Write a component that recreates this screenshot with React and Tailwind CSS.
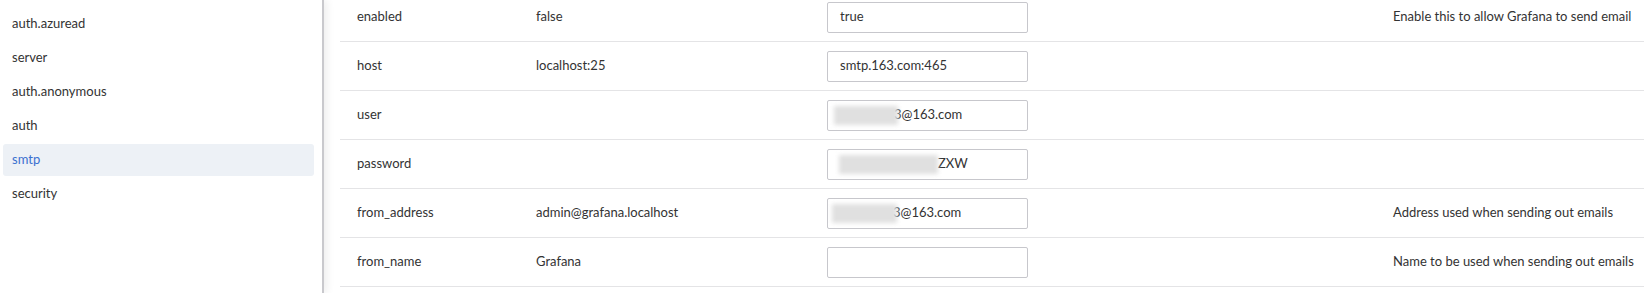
import React from 'react';

const sections = ['auth.azuread', 'server', 'auth.anonymous', 'auth', 'smtp', 'security'];

// rows of the smtp section: key, default, value, description
const rows = [
  { key: 'enabled', def: 'false', value: 'true', desc: 'Enable this to allow Grafana to send email' },
  { key: 'host', def: 'localhost:25', value: 'smtp.163.com:465', desc: '' },
  { key: 'user', def: '', value: '3@163.com', mask: 'w-[64px] ml-[-6px] mr-[-4px]', desc: '' },
  { key: 'password', def: '', value: 'ZXW', mask: 'w-[99px] ml-[-1px]', desc: '' },
  { key: 'from_address', def: 'admin@grafana.localhost', value: '3@163.com', mask: 'w-[65px] ml-[-8px] mr-[-4px]', desc: 'Address used when sending out emails' },
  { key: 'from_name', def: 'Grafana', value: '', desc: 'Name to be used when sending out emails' },
];

const Field = ({ value, mask }) => (
  <div className="w-[201px] h-[31px] border border-[#c7c7cc] rounded-[2px] bg-white flex items-center px-[12px] text-[#333] overflow-hidden whitespace-nowrap">
    {mask && <div className={`${mask} h-[19px] bg-[#e0e0e0] blur-[2px] shrink-0 relative z-10`} />}
    <span>{value}</span>
  </div>
);

const App = () => {
  return (
    <div className="w-screen h-[293px] flex bg-white overflow-hidden text-[13px] text-[#333] font-['Segoe_UI','Lato','Liberation_Sans',sans-serif]">
      {/* Sidebar */}
      <div className="w-[324px] shrink-0 border-r-2 border-[#c9c9cd] pt-[8px] pl-[3px] pr-[8px] shadow-[3px_0_8px_rgba(0,0,0,0.07)] z-20">
        {sections.map((s) => (
          <div
            key={s}
            className={`h-[32px] mb-[2px] px-[9px] flex items-center rounded-[3px] ${
              s === 'smtp' ? 'bg-[#edf1f6] text-[#3a70d0]' : ''
            }`}
          >
            {s}
          </div>
        ))}
      </div>

      {/* Settings table */}
      <div className="flex-1 pl-[16px] mt-[-7px]">
        {rows.map((r) => (
          <div
            key={r.key}
            className="grid grid-cols-[179px_291px_566px_1fr] h-[49px] items-center border-b border-[#e4e4e6] whitespace-nowrap"
          >
            <div className="px-[17px]">{r.key}</div>
            <div className="px-[17px]">{r.def}</div>
            <div className="px-[17px]">
              <Field value={r.value} mask={r.mask} />
            </div>
            <div className="px-[17px]">{r.desc}</div>
          </div>
        ))}
      </div>
    </div>
  );
};

export default App;
